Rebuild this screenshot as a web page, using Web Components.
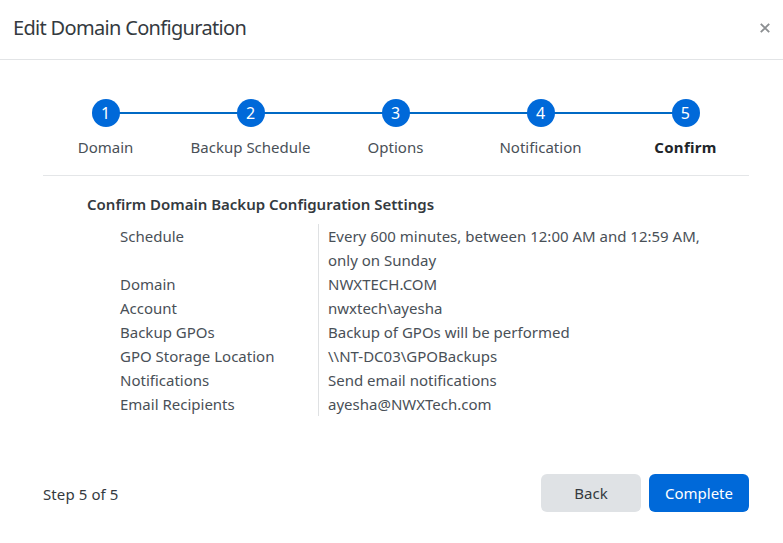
<!DOCTYPE html>
<html><head><meta charset="utf-8"><style>
html,body{margin:0;padding:0;background:#fff}
body{font-family:"Noto Sans","Open Sans",sans-serif;color:#343a40}
</style></head><body>
<domain-dialog title-text="Edit Domain Configuration">
<wizard-stepper></wizard-stepper>
<summary-section heading="Confirm Domain Backup Configuration Settings">
<summary-row label="Schedule">Every 600 minutes, between 12:00 AM and 12:59 AM, only on Sunday</summary-row>
<summary-row label="Domain">NWXTECH.COM</summary-row>
<summary-row label="Account">nwxtech\ayesha</summary-row>
<summary-row label="Backup GPOs">Backup of GPOs will be performed</summary-row>
<summary-row label="GPO Storage Location">\\NT-DC03\GPOBackups</summary-row>
<summary-row label="Notifications">Send email notifications</summary-row>
<summary-row label="Email Recipients">ayesha@NWXTech.com</summary-row>
</summary-section>
</domain-dialog>
<script>
const def=(n,css,html)=>customElements.define(n,class extends HTMLElement{
  connectedCallback(){ if(this.shadowRoot)return; const s=this.attachShadow({mode:'open'});
    s.innerHTML='<style>'+css+'</style>'+(typeof html==='function'?html(this):html); }
});
def('domain-dialog',`
:host{display:flex;flex-direction:column;width:783px;height:543px;box-sizing:border-box;background:#fff}
header{height:60px;flex:none;box-sizing:border-box;display:flex;align-items:center;justify-content:space-between;padding:0 13px 3px 13px;border-bottom:1px solid #e2e4e6}
h1{margin:0;font:400 20px/24px "Noto Sans",sans-serif;letter-spacing:-.68px;color:#343a40}
svg{display:block}
main{flex:1;min-height:0;padding:0 34px 0 43px}
footer{height:69px;flex:none;box-sizing:border-box;display:flex;align-items:flex-start;justify-content:space-between;padding:0 34px 0 43px;}
.step{font-size:15px;line-height:41px;letter-spacing:.1px;color:#343a40}
.btns{display:flex;gap:8px}
button{width:100px;height:38px;border:0;border-radius:6px;font:400 15px/38px "Noto Sans",sans-serif;padding:0}
.back{background:#dfe2e5;color:#343a40}
.done{background:#0069d9;color:#fff}
`,h=>`<header><h1>${h.getAttribute('title-text')}</h1>
<svg width="10" height="10" viewBox="0 0 10 10" aria-label="Close"><path d="M.8.8l8.4 8.4M9.2.8L.8 9.2" stroke="#8c8f92" stroke-width="1.9" fill="none"/></svg></header>
<main><slot></slot></main>
<footer><span class="step">Step 5 of 5</span><div class="btns"><button class="back">Back</button><button class="done">Complete</button></div></footer>`);
def('wizard-stepper',`
:host{display:block;margin:0 -9px 0 -10px;padding:39px 0 19px;position:relative}
:host::after{content:"";position:absolute;left:10px;right:9px;bottom:0;height:1px;background:#e4e6e8}
ol{list-style:none;margin:0;padding:0;display:grid;grid-template-columns:repeat(5,145px)}
li{display:flex;flex-direction:column;align-items:center;position:relative;font-size:15px;line-height:20px;color:#495057}
li:not(:last-child)::before{content:"";position:absolute;left:50%;width:100%;top:13px;height:2px;background:#0069c4}
b{position:relative;width:28px;height:28px;border-radius:50%;background:#0069d9;color:#fff;font:400 16px/28px "Noto Sans",sans-serif;text-align:center;margin-bottom:10px}
li.on{font-weight:700;color:#212529;letter-spacing:.3px}
`,()=>`<ol>${['Domain','Backup Schedule','Options','Notification','Confirm'].map((t,i)=>`<li class="${i==4?'on':''}"><b>${i+1}</b><span>${t}</span></li>`).join('')}</ol>`);
def('summary-section',`
:host{display:block;padding:16px 0 0 44px}
h2{margin:0 0 8px;font:600 15px/24px "Noto Sans",sans-serif;color:#343a40}
.rows{display:flex;flex-direction:column;padding-left:33px}
`,h=>`<h2>${h.getAttribute('heading')}</h2><div class="rows"><slot></slot></div>`);
def('summary-row',`
:host{display:grid;grid-template-columns:198px 1fr;font-size:15px;line-height:24px;color:#495057}
.v{border-left:1px solid #dfe1e3;padding-left:9px;width:388px}
`,h=>`<div class="l">${h.getAttribute('label')}</div><div class="v"><slot></slot></div>`);
</script>
</body></html>
